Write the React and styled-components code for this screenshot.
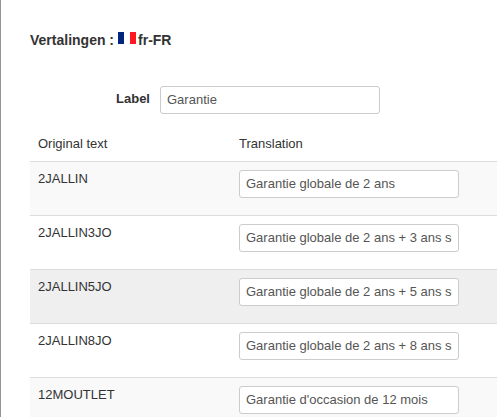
import React from "react";
import styled, { createGlobalStyle } from "styled-components";

const GlobalStyle = createGlobalStyle`
  * { box-sizing: border-box; }
  body {
    margin: 0;
    overflow: hidden;
    background: #fff;
    color: #333;
    font: 13px/18px "Liberation Sans", Arial, sans-serif;
  }
`;

const Page = styled.main`
  height: 417px;
  overflow: hidden;
  border-left: 1px solid #959595;
  padding: 31px 0 0 29px;
`;

const Title = styled.h1`
  display: flex;
  align-items: flex-start;
  margin: 0;
  height: 55px;
  font-size: 14px;
  line-height: 18px;
  font-weight: bold;
`;

const Flag = styled.svg`
  flex: none;
  width: 18px;
  height: 12px;
  margin: 1px 2px 0 4px;
`;

const Field = styled.div`
  display: flex;
  height: 39px;
`;

const Label = styled.label`
  width: 120px;
  margin-right: 10px;
  padding-top: 4px;
  text-align: right;
  font-weight: bold;
`;

const Input = styled.input`
  display: block;
  width: 220px;
  height: 28px;
  margin: 0;
  padding: 3px 6px 5px;
  border: 1px solid #ccc;
  border-radius: 3px;
  background: #fff;
  color: #555;
  font: inherit;
  outline: none;
`;

const HeaderRow = styled.div`
  display: grid;
  grid-template-columns: 201px 1fr;
  height: 36px;
  padding: 10px 0 0 8px;
`;

const Row = styled.div`
  display: grid;
  grid-template-columns: 201px 1fr;
  align-items: start;
  height: 54px;
  padding: 8px 0 0 8px;
  border-top: 1px solid #ddd;
  background: ${({ $tone }) => $tone};
`;

const rows = [
  { code: "2JALLIN", text: "Garantie globale de 2 ans", tone: "#f9f9f9" },
  { code: "2JALLIN3JO", text: "Garantie globale de 2 ans + 3 ans sur site", tone: "#fff" },
  { code: "2JALLIN5JO", text: "Garantie globale de 2 ans + 5 ans sur site", tone: "#efefef" },
  { code: "2JALLIN8JO", text: "Garantie globale de 2 ans + 8 ans sur site", tone: "#fff" },
  { code: "12MOUTLET", text: "Garantie d'occasion de 12 mois", tone: "#f9f9f9" },
];

export default function App() {
  return (
    <>
      <GlobalStyle />
      <Page>
        <Title>
          <span>Vertalingen :</span>
          <Flag viewBox="0 0 18 12" aria-hidden="true">
            <rect width="6" height="12" fill="#00267f" />
            <rect x="6" width="6" height="12" fill="#fff" />
            <rect x="12" width="6" height="12" fill="#ff1722" />
          </Flag>
          <span>fr-FR</span>
        </Title>
        <Field>
          <Label htmlFor="label">Label</Label>
          <Input id="label" defaultValue="Garantie" />
        </Field>
        <HeaderRow>
          <span>Original text</span>
          <span>Translation</span>
        </HeaderRow>
        {rows.map(({ code, text, tone }) => (
          <Row key={code} $tone={tone}>
            <span>{code}</span>
            <Input aria-label={code} defaultValue={text} />
          </Row>
        ))}
      </Page>
    </>
  );
}
